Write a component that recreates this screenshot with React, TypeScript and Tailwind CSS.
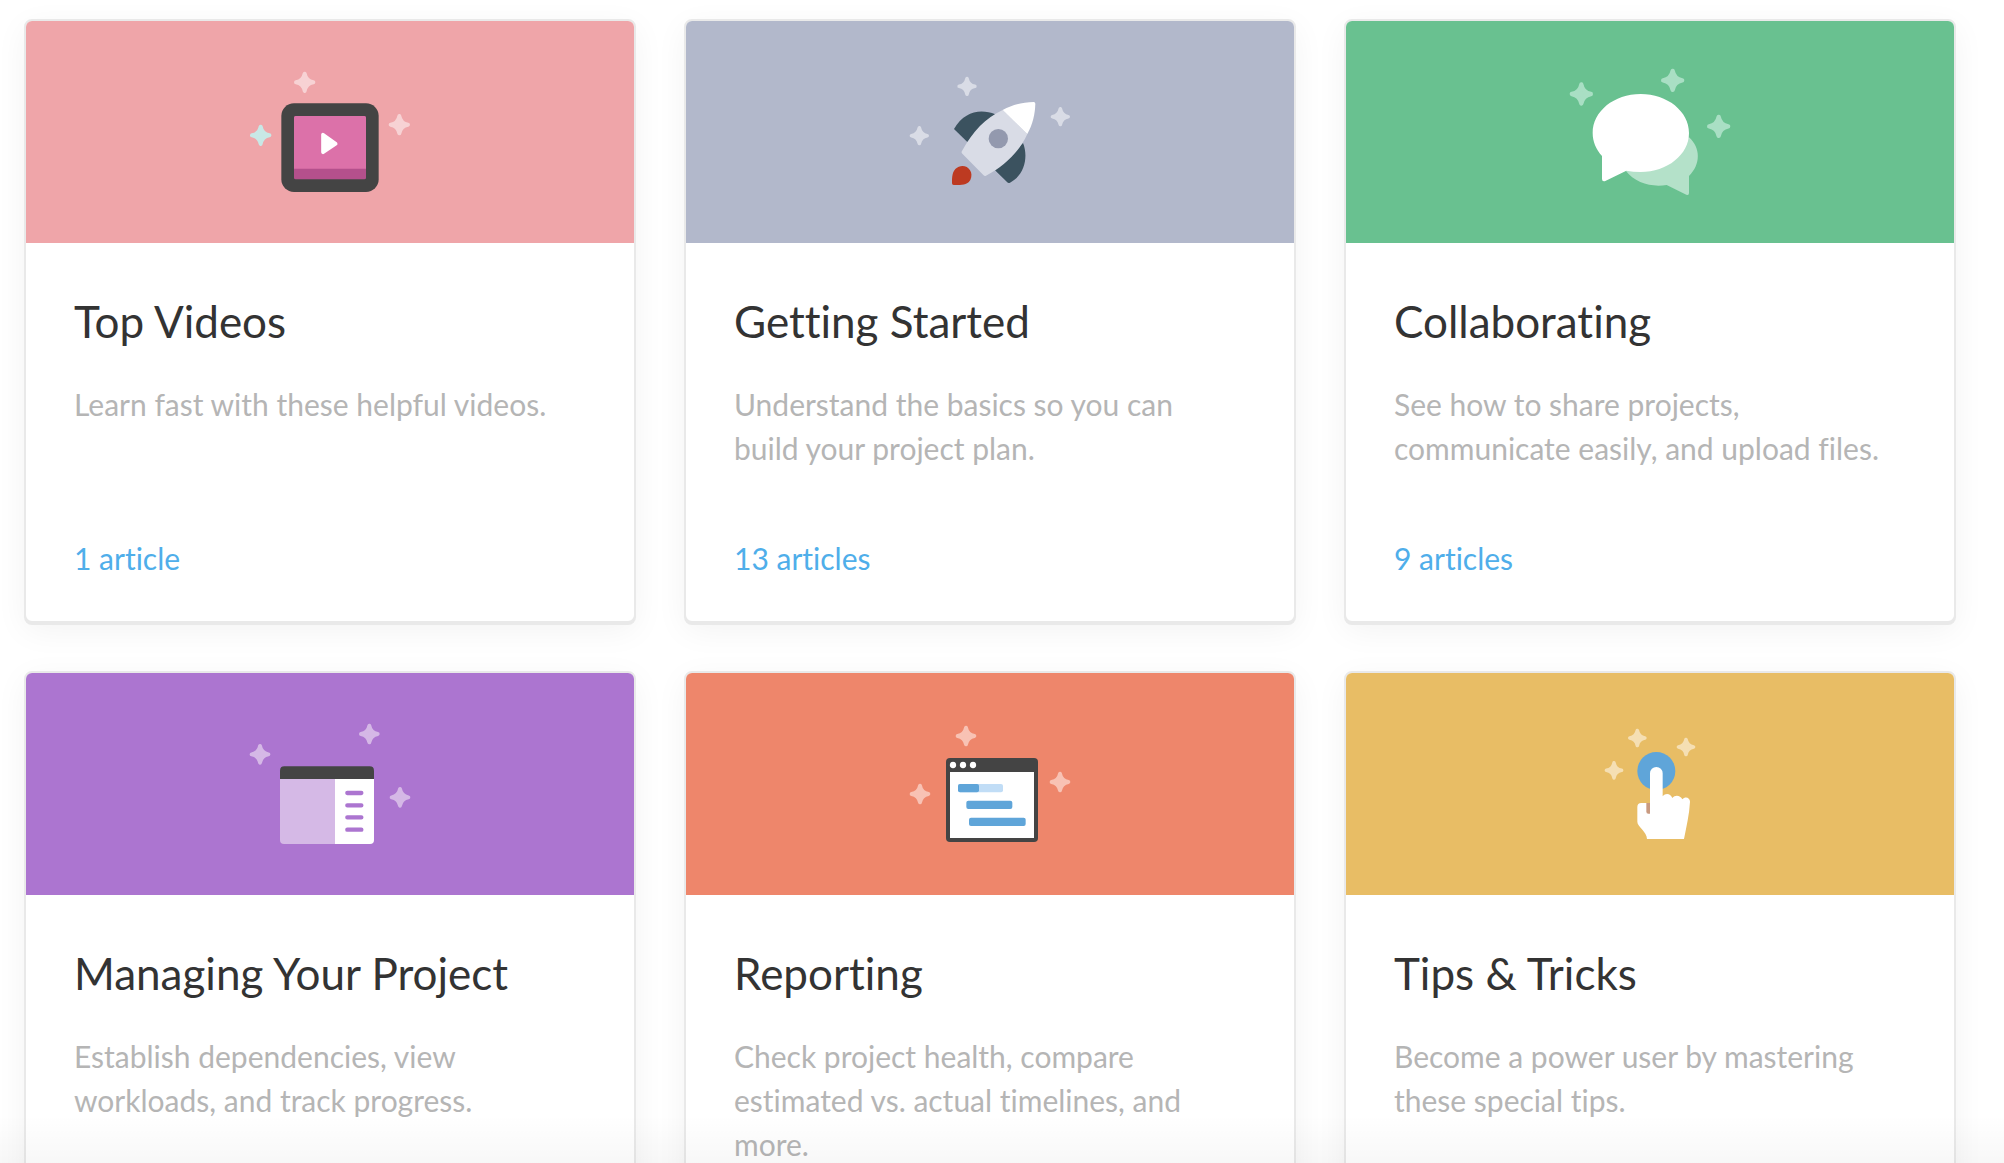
import type { ReactNode } from 'react';

function Sparkle({ x, y, r, color }: { x: number; y: number; r: number; color: string }) {
  return (
    <path
      d="M0-26Q4-4 26 0Q4 4 0 26Q-4 4-26 0Q-4-4 0-26Z"
      transform={`translate(${x} ${y}) scale(${r / 32})`}
      fill={color}
      stroke={color}
      strokeWidth="12"
      strokeLinejoin="round"
    />
  );
}

function VideoIcon() {
  return (
    <svg className="h-40 w-50" viewBox="0 6 600 480" aria-hidden="true">
      <Sparkle x={224} y={97} r={32} color="#f7d2d4" />
      <Sparkle x={92} y={256} r={32} color="#c8e8e6" />
      <Sparkle x={508} y={224} r={32} color="#f7d2d4" />
      <rect x="154" y="160" width="292" height="266" rx="38" fill="#444" />
      <rect x="192" y="198" width="216" height="190" rx="5" fill="#b4508c" />
      <path d="M192 356V203a5 5 0 0 1 5-5H403a5 5 0 0 1 5 5V356Z" fill="#dc71a9" />
      <path d="M279 254V307L317 281Z" fill="#fff" stroke="#fff" strokeWidth="11" strokeLinejoin="round" />
    </svg>
  );
}

function RocketIcon() {
  return (
    <svg className="h-40 w-50" viewBox="0 6 600 480" aria-hidden="true">
      <Sparkle x={231} y={109} r={29} color="#d9dce6" />
      <Sparkle x={88} y={257} r={29} color="#d9dce6" />
      <Sparkle x={511} y={200} r={29} color="#d9dce6" />
      <path d="M192 237C222 184 272 175 316 193L232 276Z" fill="#3b525f" />
      <path d="M315 361L399 279C414 314 408 374 360 398Q355 401 351 396Z" fill="#3b525f" />
      <path
        d="M216 303C248 245 287 203 338 180L412 252C389 303 345 347 288 377Q284 379 280 375L217 311Q213 307 216 303Z"
        fill="#d9dce6"
      />
      <path d="M338 180C369 164 400 156 431 156Q436 156 436 161C435 193 428 222 412 252Z" fill="#fff" />
      <circle cx="325" cy="266" r="29" fill="#9399ae" />
      <path d="M186 400C186 377 188 366 196 357C220 334 256 358 241 390C233 404 219 406 191 405Q186 405 186 400Z" fill="#bd3a21" />
    </svg>
  );
}

function ChatIcon() {
  return (
    <svg className="h-40 w-50" viewBox="0 6 600 480" aria-hidden="true">
      <Sparkle x={94} y={132} r={35} color="#a9dfc4" />
      <Sparkle x={368} y={91} r={35} color="#a9dfc4" />
      <Sparkle x={506} y={229} r={35} color="#a9dfc4" />
      <path
        d="M417 262C452 293 453 343 417 378V429Q417 437 409 434L350 405C304 412 256 400 226 361Z"
        fill="#b4e1c9"
      />
      <path
        d="M272 132C352 132 417 184 417 249S352 366 272 366Q249 366 229 362L166 393Q156 396 156 387V318C138 298 128 275 128 249C128 184 192 132 272 132Z"
        fill="#fff"
      />
    </svg>
  );
}

function PanelIcon() {
  return (
    <svg className="h-40 w-50" viewBox="0 -18 600 480" aria-hidden="true">
      <Sparkle x={90} y={133} r={31} color="#d5b8e6" />
      <Sparkle x={418} y={72} r={31} color="#d5b8e6" />
      <Sparkle x={510} y={262} r={31} color="#d5b8e6" />
      <path d="M150 207H315V402H162Q150 402 150 390Z" fill="#d5b9e6" />
      <path d="M315 207H432V390Q432 402 420 402H315Z" fill="#fff" />
      <path d="M150 207V182Q150 169 163 169H419Q432 169 432 182V207Z" fill="#444" />
      <path d="M352 249H394M352 286H394M352 322H394M352 359H394" stroke="#ac75d0" strokeWidth="13" strokeLinecap="round" />
    </svg>
  );
}

function ReportIcon() {
  return (
    <svg className="h-40 w-50" viewBox="0 -18 600 480" aria-hidden="true">
      <Sparkle x={228} y={78} r={31} color="#f8c2b4" />
      <Sparkle x={90} y={252} r={31} color="#f8c2b4" />
      <Sparkle x={510} y={216} r={31} color="#f8c2b4" />
      <rect x="168" y="144" width="276" height="252" rx="12" fill="#444" />
      <path d="M180 186H432V384H180Z" fill="#fff" />
      <circle cx="189" cy="165" r="9.500" fill="#fff" />
      <circle cx="219" cy="165" r="9.500" fill="#fff" />
      <circle cx="249" cy="165" r="9.500" fill="#fff" />
      <rect x="204" y="222" width="135" height="25" rx="6" fill="#c1ddf6" />
      <rect x="204" y="222" width="63" height="25" rx="6" fill="#5fa5d9" />
      <rect x="229" y="272" width="138" height="25" rx="6" fill="#5fa5d9" />
      <rect x="237" y="323" width="170" height="25" rx="6" fill="#5fa5d9" />
    </svg>
  );
}

function TapIcon() {
  return (
    <svg className="h-40 w-50" viewBox="0 -18 600 480" aria-hidden="true">
      <Sparkle x={262} y={84} r={28} color="#f5dfb3" />
      <Sparkle x={408} y={111} r={28} color="#f5dfb3" />
      <Sparkle x={192} y={181} r={28} color="#f5dfb3" />
      <circle cx="319" cy="183" r="57" fill="#5fa5d9" />
      <path
        d="M300 279V190A19 19 0 0 1 338 190V259C347 248 361 250 367 264C376 253 391 256 397 268C406 257 420 263 420 275C418 315 409 350 402 387H291C291 365 262 350 262 335V291Q262 279 274 279Z"
        fill="#fff"
      />
      <path d="M289 279H300V311H295Q289 311 289 305Z" fill="#c99a80" />
    </svg>
  );
}

type Topic = {
  title: string;
  description: string;
  count?: string;
  banner: string;
  icon: ReactNode;
};

const topics: Topic[] = [
  { title: 'Top Videos', description: 'Learn fast with these helpful videos.', count: '1 article', banner: 'bg-[#efa5a9]', icon: <VideoIcon /> },
  { title: 'Getting Started', description: 'Understand the basics so you can build your project plan.', count: '13 articles', banner: 'bg-[#b2b8cb]', icon: <RocketIcon /> },
  { title: 'Collaborating', description: 'See how to share projects, communicate easily, and upload files.', count: '9 articles', banner: 'bg-[#69c190]', icon: <ChatIcon /> },
  { title: 'Managing Your Project', description: 'Establish dependencies, view workloads, and track progress.', banner: 'bg-[#ac75d0]', icon: <PanelIcon /> },
  { title: 'Reporting', description: 'Check project health, compare estimated vs. actual timelines, and more.', banner: 'bg-[#ee866b]', icon: <ReportIcon /> },
  { title: 'Tips & Tricks', description: 'Become a power user by mastering these special tips.', banner: 'bg-[#e8bd65]', icon: <TapIcon /> },
];

function TopicCard({ topic }: { topic: Topic }) {
  return (
    <a
      href="#"
      className="flex min-h-[604px] flex-col overflow-hidden rounded-lg border-2 border-[#e9e9e9] bg-white shadow-[0_2px_0_#e9e9e9,0_8px_32px_rgba(0,0,0,0.05)]"
    >
      <div className={`flex h-[222px] items-center justify-center ${topic.banner}`}>{topic.icon}</div>
      <div className="flex flex-1 flex-col pt-12 pr-14 pb-[41px] pl-12">
        <h2 className="text-[44px] leading-[60px] text-[#333]">{topic.title}</h2>
        <p className="mt-[31px] text-[30px] leading-[44px] text-[#b5b5b5]">{topic.description}</p>
        {topic.count && <span className="mt-auto text-[30px] leading-[44px] text-[#4faeea]">{topic.count}</span>}
      </div>
    </a>
  );
}

export default function App() {
  return (
    <main className="relative h-screen overflow-hidden bg-white font-['Lato',sans-serif] [font-variant-ligatures:none]">
      <div className="grid grid-cols-3 gap-12 pt-[19px] pr-12 pl-6">
        {topics.map((topic) => (
          <TopicCard key={topic.title} topic={topic} />
        ))}
      </div>
      <div className="pointer-events-none absolute inset-x-0 bottom-0 h-12 bg-linear-to-t from-black/3 to-transparent" />
    </main>
  );
}
